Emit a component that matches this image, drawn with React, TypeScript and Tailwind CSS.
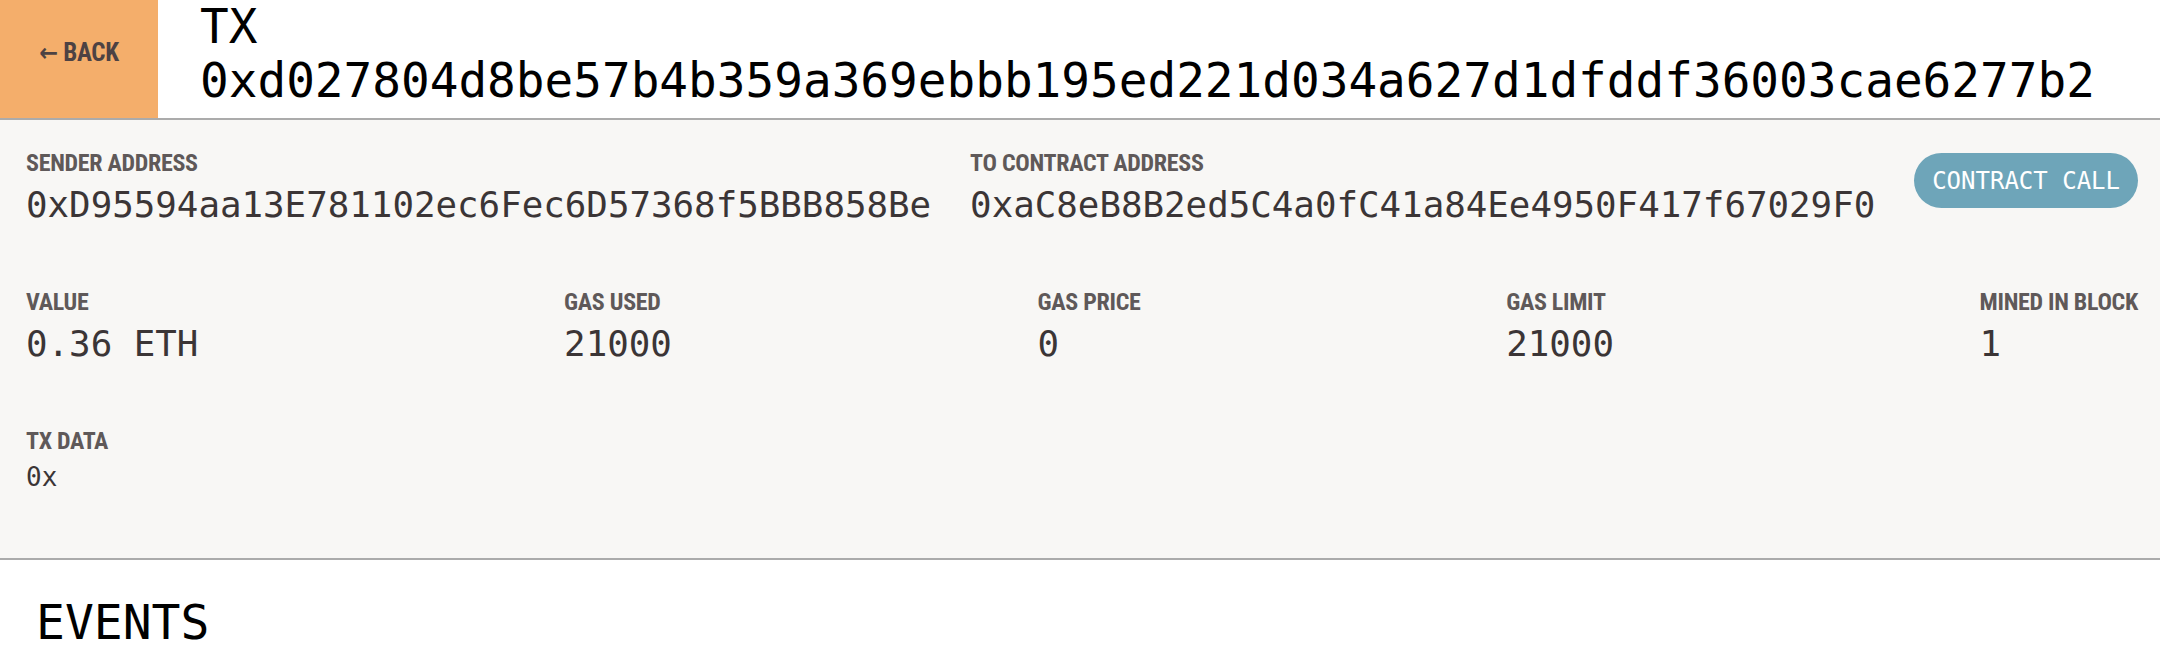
import React from 'react';

const mono = "font-['DejaVu_Sans_Mono','Liberation_Mono',monospace]";
const cond = "font-['Roboto_Condensed','Liberation_Sans_Narrow','DejaVu_Sans_Condensed',Roboto,sans-serif]";

const Field = ({ label, value }: { label: string; value: string }) => (
  <div className="flex flex-col">
    <div className={`${cond} text-[24px] leading-[27px] font-bold tracking-[-0.3px] text-[#5f5959]`}>
      {label}
    </div>
    <div className={`${mono} mt-[6px] text-[35.8px] leading-[44px] text-[#3b3536] whitespace-nowrap`}>{value}</div>
  </div>
);

export default function App() {
  const stats = [
    { label: 'VALUE', value: '0.36 ETH' },
    { label: 'GAS USED', value: '21000' },
    { label: 'GAS PRICE', value: '0' },
    { label: 'GAS LIMIT', value: '21000' },
    { label: 'MINED IN BLOCK', value: '1' },
  ];

  return (
    <div className="w-[2160px] h-[664px] bg-white overflow-hidden">
      {/* header */}
      <div className="flex h-[120px] border-b-2 border-[#ababab]">
        <button className="w-[158px] shrink-0 bg-[#f4ae6b] flex items-center justify-center pb-[12px]">
          <span className={`${cond} text-[25px] font-bold tracking-[-0.3px] text-[#4d4243]`}>← BACK</span>
        </button>
        <div className={`${mono} pl-[42px] text-[47.7px] leading-[54px] text-black`}>
          <div>TX</div>
          <div className="whitespace-nowrap">0xd027804d8be57b4b359a369ebbb195ed221d034a627d1dfddf36003cae6277b2</div>
        </div>
      </div>

      {/* details */}
      <div className="bg-[#f8f7f5] border-b-2 border-[#ababab] pl-[26px] pr-[22px] pt-[30px] pb-[65px]">
        <div className="flex justify-between items-start">
          <Field label="SENDER ADDRESS" value="0xD95594aa13E781102ec6Fec6D57368f5BBB858Be" />
          <Field label="TO CONTRACT ADDRESS" value="0xaC8eB8B2ed5C4a0fC41a84Ee4950F417f67029F0" />
          <div className={`${mono} mt-[3px] h-[55px] px-[18px] rounded-full bg-[#6ea5b9] text-white text-[24px] flex items-center`}>
            CONTRACT CALL
          </div>
        </div>
        <div className="flex justify-between mt-[62px]">
          {stats.map((s) => (
            <Field key={s.label} label={s.label} value={s.value} />
          ))}
        </div>
        <div className="flex flex-col mt-[62px]">
          <div className={`${cond} text-[24px] leading-[27px] font-bold tracking-[-0.3px] text-[#5f5959]`}>
            TX DATA
          </div>
          <div className={`${mono} mt-[6px] text-[26px] leading-[32px] text-[#3b3536]`}>0x</div>
        </div>
      </div>

      {/* events */}
      <div className={`${mono} pl-[36px] pt-[34px] text-[48px] leading-[56px] text-black`}>EVENTS</div>
    </div>
  );
}
